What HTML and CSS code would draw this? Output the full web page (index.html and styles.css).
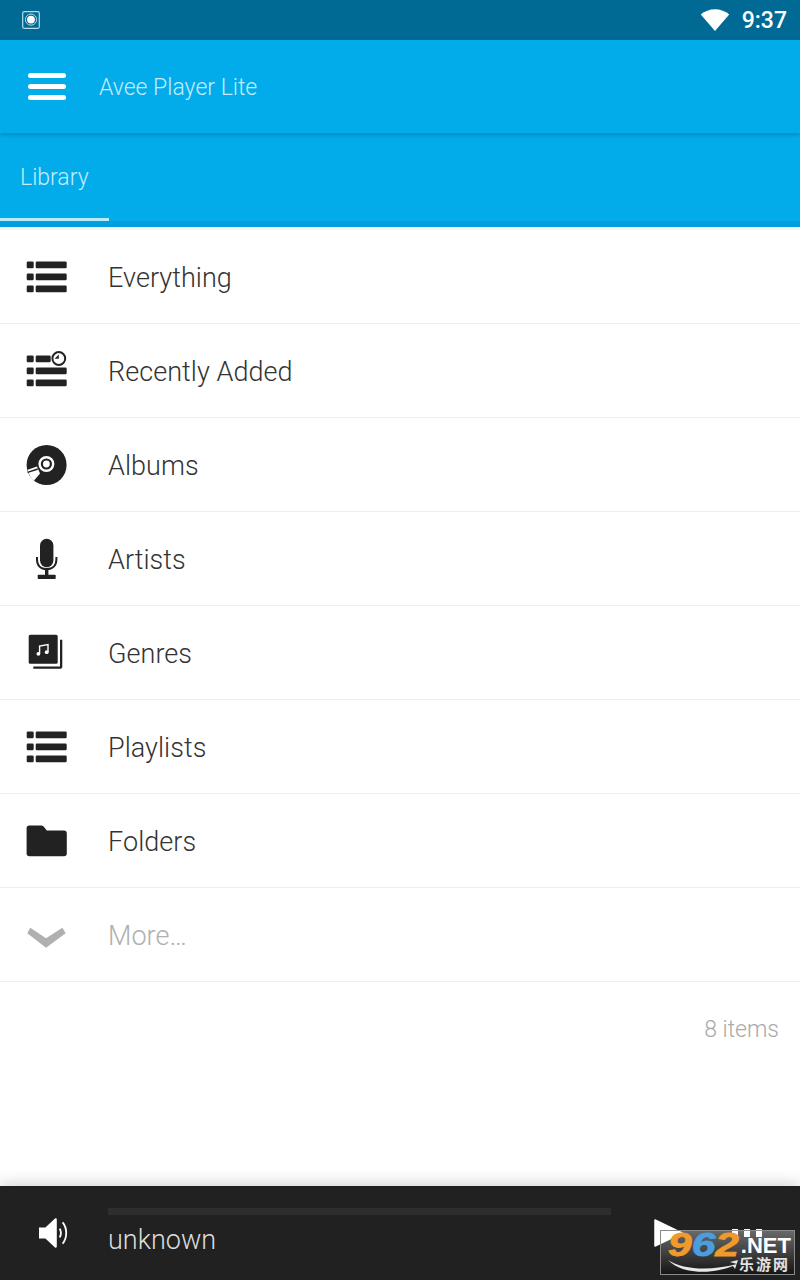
FILE: index.html
```html
<!DOCTYPE html>
<html lang="en">
  <head>
    <meta charset="UTF-8" />
    <meta name="viewport" content="width=device-width, initial-scale=1.0" />
    <title>Avee Player Lite</title>
    <link rel="stylesheet" href="styles.css">
  </head>
  <body>
    <svg class="defs" width="0" height="0">
      <symbol id="list-icon" viewBox="0 0 48 48">
        <rect x="4.7" y="8.6" width="7" height="6.6" rx="1.2" />
        <rect x="13.7" y="8.6" width="31" height="6.6" rx="1.2" />
        <rect x="4.7" y="20.6" width="7" height="6.6" rx="1.2" />
        <rect x="13.7" y="20.6" width="31" height="6.6" rx="1.2" />
        <rect x="4.7" y="32.6" width="7" height="6.6" rx="1.2" />
        <rect x="13.7" y="32.6" width="31" height="6.6" rx="1.2" />
      </symbol>
    </svg>

    <div class="status-bar">
      <svg class="rec-icon" width="18" height="18" viewBox="0 0 18 18">
        <rect x="0.7" y="0.7" width="16.6" height="16.6" rx="1.5" fill="none" stroke="#b5dcea" stroke-width="1.2" />
        <circle cx="9" cy="8.6" r="5.6" fill="none" stroke="#b5dcea" stroke-width="1" />
        <circle cx="9" cy="8.6" r="3.9" fill="#fff" />
      </svg>
      <svg class="wifi-icon" width="30" height="24" viewBox="0 0 30 24">
        <path d="M15 23 L0.8 6.4 C4.6 3.2 9.6 1.2 15 1.2 C20.4 1.2 25.4 3.2 29.2 6.4 Z" fill="#fff" />
      </svg>
      <span class="clock">9:37</span>
    </div>

    <header class="app-bar">
      <div class="burger"><i></i><i></i><i></i></div>
      <span class="app-title">Avee Player Lite</span>
    </header>

    <nav class="tabs">
      <div class="tab">Library</div>
    </nav>
    <div class="tab-strip"></div>

    <main class="library">
      <div class="row">
        <svg class="icon" width="48" height="48"><use href="#list-icon" /></svg>
        <span>Everything</span>
      </div>
      <div class="row">
        <svg class="icon" width="48" height="48" viewBox="0 0 48 48">
          <rect x="4.7" y="8.6" width="7" height="6.6" rx="1.2" />
          <rect x="13.7" y="8.6" width="15" height="6.6" rx="1.2" />
          <rect x="4.7" y="20.6" width="7" height="6.6" rx="1.2" />
          <rect x="13.7" y="20.6" width="31" height="6.6" rx="1.2" />
          <rect x="4.7" y="32.6" width="7" height="6.6" rx="1.2" />
          <rect x="13.7" y="32.6" width="31" height="6.6" rx="1.2" />
          <circle cx="36.8" cy="11.5" r="6.4" fill="#fff" stroke="#222" stroke-width="2" />
          <path d="M36.8 7.6 V11.8 H32.6 Z" />
        </svg>
        <span>Recently Added</span>
      </div>
      <div class="row">
        <svg class="icon" width="48" height="48" viewBox="0 0 48 48">
          <circle cx="24.6" cy="24" r="20" />
          <circle cx="24.4" cy="23" r="6.8" fill="none" stroke="#fff" stroke-width="2.4" />
          <circle cx="24.4" cy="23" r="3.4" fill="#fff" />
          <path d="M5.6 28.8 L15 25.6 L18 32.4 L11.6 40 C8.8 37 6.6 33 5.6 28.8 Z" fill="#fff" />
          <path d="M5.6 31.4 L15.8 28" stroke="#222" stroke-width="1.4" />
        </svg>
        <span>Albums</span>
      </div>
      <div class="row">
        <svg class="icon" width="48" height="48" viewBox="0 0 48 48">
          <rect x="18" y="3.8" width="13.4" height="28.4" rx="6.7" />
          <path d="M15 22 V24.4 C15 30.4 18.6 34 24.6 34 C30.6 34 34.4 30.4 34.4 24.4 V22" fill="none" stroke="#222" stroke-width="2" />
          <rect x="23" y="33" width="3.4" height="8" />
          <rect x="15.7" y="39.7" width="18" height="4.3" rx="0.8" />
        </svg>
        <span>Artists</span>
      </div>
      <div class="row">
        <svg class="icon" width="48" height="48" viewBox="0 0 48 48">
          <path d="M11.3 39.8 H38.4 C39.6 39.8 40.3 39 40.3 37.8 V10.8 H38 V37.5 H11.3 Z" />
          <rect x="6.7" y="5.8" width="29" height="29" rx="1.6" />
          <path d="M17.6 24.6 V17 L26 15.6 V23" fill="none" stroke="#fff" stroke-width="1.4" />
          <circle cx="16.4" cy="24.8" r="1.9" fill="#fff" />
          <circle cx="24.7" cy="23.2" r="1.9" fill="#fff" />
        </svg>
        <span>Genres</span>
      </div>
      <div class="row">
        <svg class="icon" width="48" height="48"><use href="#list-icon" /></svg>
        <span>Playlists</span>
      </div>
      <div class="row">
        <svg class="icon" width="48" height="48" viewBox="0 0 48 48">
          <path d="M7.4 8.5 H19 C20.4 8.5 21.2 9 22 10 L24.8 13.5 H42 C43.8 13.5 44.8 14.5 44.8 16.3 V36.4 C44.8 38.2 43.8 39.2 42 39.2 H7.4 C5.6 39.2 4.6 38.2 4.6 36.4 V11.3 C4.6 9.5 5.6 8.5 7.4 8.5 Z" />
        </svg>
        <span>Folders</span>
      </div>
      <div class="row row-more">
        <svg class="icon icon-more" width="48" height="48" viewBox="0 0 48 48">
          <path d="M8.3 16.8 L5.3 22.2 L24 36.8 L43.7 22.2 L40.3 16.8 L24 27.2 Z" />
        </svg>
        <span>More…</span>
      </div>
      <div class="count">8 items</div>
    </main>

    <footer class="player">
      <svg class="volume" width="32" height="34" viewBox="0 0 32 34">
        <path d="M1 11.4 H7.4 L17 2.6 C18 1.8 18.8 2.4 18.8 3.4 V30.6 C18.8 31.6 18 32.2 17 31.4 L7.4 22.6 H1 Z" fill="#fff" />
        <path d="M21.6 12.6 C23.4 15 23.4 19 21.6 21.4" fill="none" stroke="#fff" stroke-width="1.8" />
        <path d="M24.6 6.4 C29.4 12 29.4 22 24.6 27.6" fill="none" stroke="#fff" stroke-width="1.8" />
      </svg>
      <div class="now-playing">
        <div class="seek"></div>
        <div class="track">unknown</div>
      </div>
      <svg class="play" width="30" height="30" viewBox="0 0 30 30">
        <path d="M1 2 L28 15 L1 28 Z" fill="#fff" stroke="#fff" stroke-width="1.5" stroke-linejoin="round" />
      </svg>
      <div class="dots"><i></i><i></i><i></i></div>

      <div class="watermark">
        <div class="wm-top">
          <span class="wm-num"><b>9</b><em>6</em><b>2</b></span>
          <span class="wm-net">.NET</span>
        </div>
        <div class="wm-cn">乐游网</div>
        <svg class="wm-swoosh" width="72" height="18" viewBox="0 0 72 18">
          <path d="M1 3 C16 13 44 14 70 7 L63 5 L71 3 L68 12 L66 9 C44 18 14 17 1 3 Z" fill="#e8e8e8" />
        </svg>
      </div>
    </footer>
  </body>
</html>
```

FILE: styles.css
```css
* {
  box-sizing: border-box;
  margin: 0;
  padding: 0;
}

html,
body {
  width: 800px;
  height: 1280px;
  overflow: hidden;
}

body {
  display: flex;
  flex-direction: column;
  font-family: 'Roboto', 'Noto Sans CJK SC', sans-serif;
  font-weight: 300;
  background-color: #fff;
}

.defs {
  position: absolute;
}

/* status bar */
.status-bar {
  display: flex;
  align-items: center;
  height: 40px;
  padding: 0 13px 0 22px;
  background-color: #006a95;
}

.wifi-icon {
  margin-left: auto;
  margin-right: 12px;
}

.clock {
  color: #fff;
  font-size: 23px;
  font-weight: 500;
}

/* app bar */
.app-bar {
  position: relative;
  z-index: 1;
  display: flex;
  align-items: center;
  height: 93px;
  padding: 0 0 0 28px;
  background-color: #02abea;
  box-shadow: 0 2px 4px rgba(0, 0, 0, 0.18);
}

.burger {
  display: flex;
  flex-direction: column;
  gap: 6px;
  width: 38px;
}

.burger i {
  display: block;
  height: 5px;
  border-radius: 2.5px;
  background-color: #fff;
}

.app-title {
  margin-left: 33px;
  padding-top: 2px;
  color: #c4ecfb;
  font-size: 23px;
}

/* tabs */
.tabs {
  display: flex;
  height: 88px;
  background-color: #02abea;
}

.tab {
  width: 109px;
  padding: 31px 0 0 20px;
  border-bottom: 3px solid #bdeafb;
  color: #c4ecfb;
  font-size: 23px;
}

.tab-strip {
  height: 6px;
  background-color: #00a0dc;
}

/* library list */
.library {
  flex: 1;
  border-top: 3px solid #f0f6f9;
}

.row {
  display: flex;
  align-items: center;
  height: 94px;
  padding-left: 22px;
  border-bottom: 1px solid #eeeeee;
  color: #333;
  font-size: 27px;
  letter-spacing: 0.05px;
}

.row span {
  margin-left: 38px;
  padding-top: 2px;
}

.icon {
  flex-shrink: 0;
  fill: #222;
}

.row-more {
  color: #b0b0b0;
}

.icon-more {
  fill: #b0b0b0;
}

.count {
  padding: 34px 21px 0 0;
  color: #aaa;
  font-size: 23px;
  text-align: right;
}

/* player */
.player {
  position: relative;
  display: flex;
  align-items: center;
  height: 94px;
  padding-left: 38px;
  background-color: #212121;
  box-shadow: 0 -3px 14px rgba(0, 0, 0, 0.16);
}

.volume {
  flex-shrink: 0;
}

.now-playing {
  align-self: flex-start;
  width: 503px;
  margin-left: 38px;
  padding-top: 22px;
}

.seek {
  height: 7px;
  background-color: #2e2e2e;
}

.track {
  margin-top: 9px;
  color: #dcdcdc;
  font-size: 27px;
}

.play {
  flex-shrink: 0;
  margin-left: 43px;
}

.dots {
  display: flex;
  gap: 6px;
  margin-left: 48px;
}

.dots i {
  display: block;
  width: 6px;
  height: 8px;
  background-color: #fff;
}

/* watermark over the player controls */
.watermark {
  position: absolute;
  right: 5px;
  bottom: 5px;
  width: 135px;
  height: 45px;
  border: 1px solid #8a8a8a;
  background: linear-gradient(rgba(255, 255, 255, 0.32) 0%, rgba(255, 255, 255, 0.14) 50%, rgba(0, 0, 0, 0.35) 100%);
}

.wm-top {
  display: flex;
  align-items: flex-start;
  height: 26px;
  margin-left: 7px;
}

.wm-num {
  margin-right: 14px;
  color: #ef9a2b;
  font-family: 'Liberation Sans', sans-serif;
  font-size: 34px;
  font-weight: 700;
  font-style: italic;
  line-height: 26px;
  transform: scaleX(1.25);
  transform-origin: left top;
  -webkit-text-stroke: 0.8px currentColor;
}

.wm-num b {
  color: #ef9a2b;
}

.wm-num em {
  color: #4a9ee0;
}

.wm-net {
  margin: 6px 0 0 2px;
  color: #fff;
  font-family: 'Liberation Sans', sans-serif;
  font-size: 22px;
  font-weight: 700;
  line-height: 18px;
}

.wm-cn {
  margin: 0 0 0 78px;
  color: #e2e2e2;
  font-size: 15px;
  font-weight: 700;
  line-height: 17px;
  letter-spacing: 2px;
}

.wm-swoosh {
  position: absolute;
  left: 6px;
  top: 26px;
}
```
